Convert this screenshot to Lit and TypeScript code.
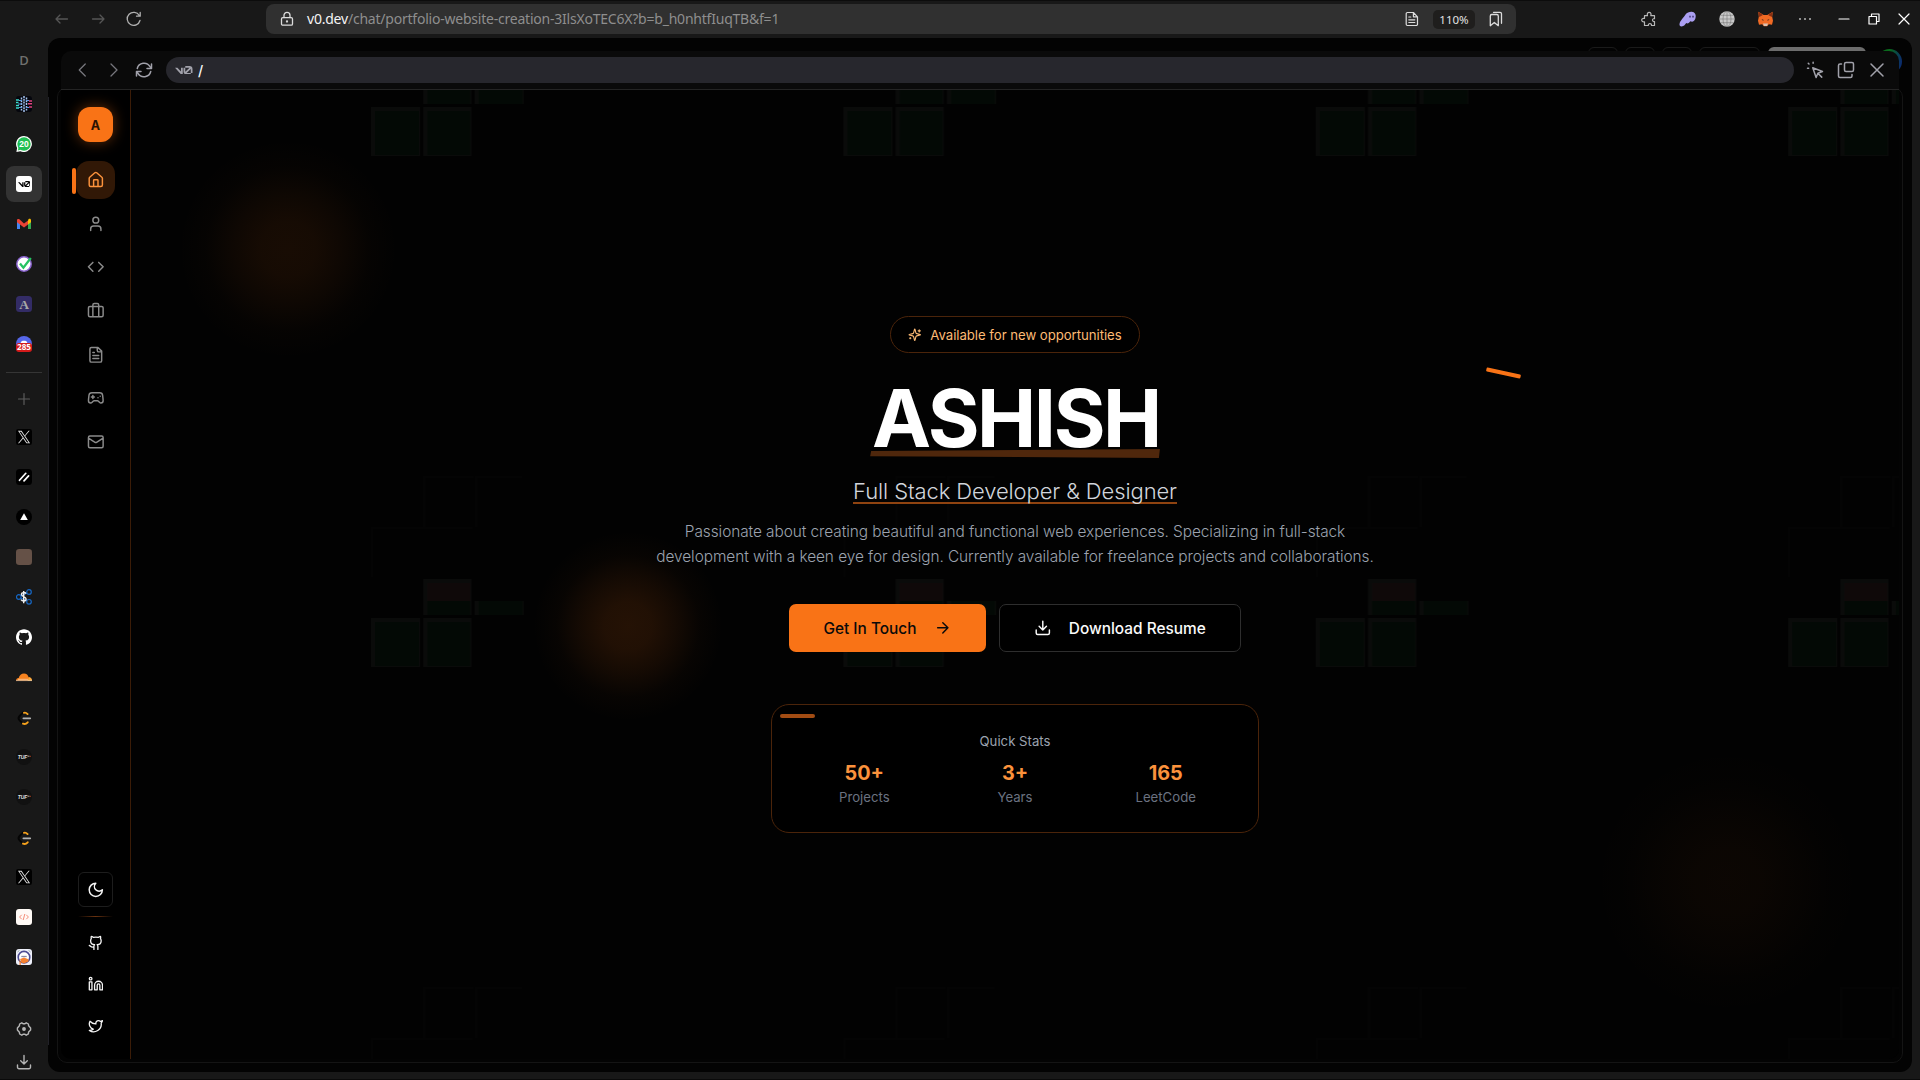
import { LitElement, html, svg, css } from "lit";
import { customElement, property } from "lit/decorators.js";

const line = (size: number, body: unknown, sw = 2, box = 24) => html`<svg
  width=${size} height=${size} viewBox="0 0 ${box} ${box}" fill="none" stroke="currentColor"
  stroke-width=${sw} stroke-linecap="round" stroke-linejoin="round">${body}</svg>`;

const p = (d: string) => svg`<path d=${d}></path>`;

const glyph = {
  home: p("M15 21v-8a1 1 0 0 0-1-1h-4a1 1 0 0 0-1 1v8M3 10a2 2 0 0 1 .709-1.528l7-5.999a2 2 0 0 1 2.582 0l7 5.999A2 2 0 0 1 21 10v9a2 2 0 0 1-2 2H5a2 2 0 0 1-2-2z"),
  user: p("M19 21v-2a4 4 0 0 0-4-4H9a4 4 0 0 0-4 4v2M12 3a4 4 0 1 1 0 8a4 4 0 1 1 0-8z"),
  code: p("m16 18 6-6-6-6M8 6l-6 6 6 6"),
  briefcase: p("M16 20V4a2 2 0 0 0-2-2h-4a2 2 0 0 0-2 2v16M4 6h16a2 2 0 0 1 2 2v10a2 2 0 0 1-2 2H4a2 2 0 0 1-2-2V8a2 2 0 0 1 2-2z"),
  file: p("M15 2H6a2 2 0 0 0-2 2v16a2 2 0 0 0 2 2h12a2 2 0 0 0 2-2V7ZM14 2v4a2 2 0 0 0 2 2h4M10 9H8M16 13H8M16 17H8"),
  gamepad: p("M6 11h4M8 9v4M15 12h.01M18 10h.01M17.32 5H6.68a4 4 0 0 0-3.978 3.59c-.006.052-.01.101-.017.152C2.604 9.416 2 14.456 2 16a3 3 0 0 0 3 3c1 0 1.5-.5 2-1l1.414-1.414A2 2 0 0 1 9.828 16h4.344a2 2 0 0 1 1.414.586L17 18c.5.5 1 1 2 1a3 3 0 0 0 3-3c0-1.545-.604-6.584-.685-7.258-.007-.05-.011-.1-.017-.151A4 4 0 0 0 17.32 5z"),
  mail: p("M4 4h16a2 2 0 0 1 2 2v12a2 2 0 0 1-2 2H4a2 2 0 0 1-2-2V6a2 2 0 0 1 2-2zM22 7l-8.97 5.7a1.94 1.94 0 0 1-2.06 0L2 7"),
  moon: p("M12 3a6 6 0 0 0 9 9 9 9 0 1 1-9-9Z"),
  github: p("M15 22v-4a4.8 4.8 0 0 0-1-3.5c3 0 6-2 6-5.5.08-1.25-.27-2.48-1-3.5.28-1.15.28-2.35 0-3.5 0 0-1 0-3 1.5-2.64-.5-5.36-.5-8 0C6 2 5 2 5 2c-.3 1.15-.3 2.35 0 3.5A5.403 5.403 0 0 0 4 9c0 3.5 3 5.5 6 5.5-.39.49-.68 1.05-.85 1.65-.17.6-.22 1.23-.15 1.85v4M9 18c-4.51 2-5-2-7-2"),
  linkedin: p("M16 8a6 6 0 0 1 6 6v7h-4v-7a2 2 0 0 0-2-2 2 2 0 0 0-2 2v7h-4v-7a6 6 0 0 1 6-6zM2 9h4v12H2zM4 2a2 2 0 1 1 0 4a2 2 0 1 1 0-4z"),
  twitter: p("M22 4s-.7 2.1-2 3.4c1.6 10-9.4 17.3-18 11.6 2.2.1 4.4-.6 6-2C3 15.5.5 9.6 3 5c2.2 2.6 5.6 4.1 9 4-.9-4.2 4-6.6 7-3.8 1.1 0 3-1.2 3-1.2z"),
  sparkles: p("M9.937 15.5A2 2 0 0 0 8.5 14.063l-6.135-1.582a.5.5 0 0 1 0-.962L8.5 9.936A2 2 0 0 0 9.937 8.5l1.582-6.135a.5.5 0 0 1 .963 0L14.063 8.5A2 2 0 0 0 15.5 9.937l6.135 1.581a.5.5 0 0 1 0 .964L15.5 14.063a2 2 0 0 0-1.437 1.437l-1.582 6.135a.5.5 0 0 1-.963 0zM20 3v4M22 5h-4M4 17v2M5 18H3"),
  arrow: p("M5 12h14M12 5l7 7-7 7"),
  download: p("M21 15v4a2 2 0 0 1-2 2H5a2 2 0 0 1-2-2v-4M7 10l5 5 5-5M12 15V3"),
};

const v0 = (w: number, fill: string) => html`<svg width=${w} height=${w / 2} viewBox="0 6 24 12" fill=${fill}>
  <path d="M14.066 6.028v2.22h5.729q.075-.001.148.005l-5.853 5.752a2 2 0 0 1-.024-.309V8.247h-2.353v5.45c0 2.322 1.935 4.222 4.258 4.222h5.675v-2.22h-5.675q-.03 0-.059-.003l5.729-5.629q.006.082.006.166v5.465H24v-5.465a4.204 4.204 0 0 0-4.205-4.205zM0 8.245l8.28 9.266c.839.94 2.396.346 2.396-.914V8.245H8.19v5.44l-4.86-5.44Z"></path></svg>`;

const fav = (body: unknown, box = 16) => html`<svg width="16" height="16" viewBox="0 0 ${box} ${box}">${body}</svg>`;

const xLogo = fav(svg`<rect width="24" height="24" rx="3.5" fill="#000"></rect>
  <path transform="translate(2.8 2.8) scale(.77)" fill="#e8e8e8" d="M14.234 10.162 22.977 0h-2.072l-7.591 8.824L7.251 0H.258l9.168 13.343L.258 24H2.33l8.016-9.318L16.749 24h6.993zm-2.837 3.299-.929-1.329L3.076 1.56h3.182l5.965 8.532.929 1.329 7.754 11.09h-3.182z"></path>`, 24);

const leet = fav(svg`<g transform="translate(0 .4)"><path d="M7 3.200 3.600 6.600a3.200 3.200 0 0 0 0 4.400L6.400 13.600" fill="none" stroke="#050505" stroke-width="1.900" stroke-linecap="round"></path>
  <path d="M8 3.400c1.300-.5 2.400 0 3.600 1.300M7 14.200c1.700.8 3.300.3 4.700-1.300" fill="none" stroke="#f5a11c" stroke-width="1.900" stroke-linecap="round"></path>
  <path d="M7.300 9h7" stroke="#b3b3b3" stroke-width="1.600" stroke-linecap="round"></path></g>`);

const tuf = fav(svg`<circle cx="8" cy="8" r="8" fill="#111"></circle>
  <text x="1.800" y="9.900" font-size="5.200" font-weight="700" font-style="italic" font-family="Liberation Sans, sans-serif" textLength="9.500" lengthAdjust="spacingAndGlyphs" fill="#e4e4e4">TUF</text>
  <path d="M11.500 7.200h2" stroke="#aaa"></path><path d="M13.600 7.300h1.400" stroke="#a33c1c"></path>`);

const pinned = [
  fav(svg`<rect width="16" height="16" rx="3" fill="#05060d"></rect>
    <path d="M8 0v16M5.500 1.500v13M10.500 1.500v13" stroke="#a5c4ee" stroke-width="1.500" stroke-dasharray="2 .8"></path>
    <path d="M3 4.500h3M2 8h4M3 11.500h3M10 4.500h3M10 11.500h3" stroke="#5c9ae0"></path>
    <path d="M0 4h3M0 6.500h2.500M0 9.500h3M0 12h3" stroke="#3bdccc" stroke-width="1.500"></path>
    <path d="M13 5h3M12 7.700h4M13 11h3" stroke="#e0447f" stroke-width="1.500"></path>`),
  fav(svg`<path d="M8 0a8 8 0 1 1-3.600 15.200L.4 16l.7-4A8 8 0 0 1 8 0z" fill="#fff"></path><circle cx="8" cy="8" r="6.700" fill="#1fbf52"></circle>
    <path d="M1.900 14.400 2.600 11l2.600 2.600z" fill="#1fbf52"></path>
    <text x="3.300" y="10.900" textLength="9.400" lengthAdjust="spacingAndGlyphs" font-size="8.200" font-weight="700" font-family="Liberation Sans, sans-serif" fill="#fff">20</text>`),
  html`<span class="v0fav">${v0(12.500, "#000")}</span>`,
  fav(svg`<path d="M1 3.800v9.200h3V7.500z" fill="#4285f4"></path><path d="M15 3.800v9.200h-3V7.500z" fill="#34a853"></path>
    <path d="M1 4v2.300l3 2.300V5zM4 8.600 8 11.400l4-2.800V4.600L8 7.600 3.400 3.300C2.200 2.500 1 3 1 4.300z" fill="#ea4335"></path><path d="M12 4.600v4l3-2.300V4.300c0-1.500-1.500-1.900-2.500-1z" fill="#fbbc04"></path>`),
  fav(svg`<circle cx="8" cy="8" r="7.200" fill="#fff" stroke="#8a63cf" stroke-width="1.500"></circle>
    <path d="m4 7.500 3.400 4.200L14.800 2" fill="none" stroke="#27c363" stroke-width="2.300"></path>`),
  fav(svg`<rect width="16" height="16" rx="3.500" fill="#332c66"></rect>
    <text x="8" y="12.700" text-anchor="middle" font-size="13.500" font-weight="700" font-family="Liberation Serif, serif" fill="#a7a7a7">A</text>`),
  fav(svg`<circle cx="8" cy="8" r="8" fill="#5667ea"></circle><path d="M4.500 7.500C5 5 6 4.700 8 4.700s3 .3 3.500 2.800z" fill="#fff"></path>
    <rect x="0" y="7" width="16" height="9" rx="3" fill="#d41a1a"></rect>
    <text x="1" y="14.400" textLength="14" lengthAdjust="spacingAndGlyphs" font-size="8" font-weight="700" font-family="Open Sans, sans-serif" fill="#fff">285</text>`),
];

const tabs = [
  xLogo,
  fav(svg`<rect width="16" height="16" rx="3.500" fill="#000"></rect>
    <path d="M3.500 11.300 9.800 4.300M8 11.900l4.600-5" stroke="#fff" stroke-width="1.700" stroke-linecap="round"></path>`),
  fav(svg`<circle cx="8" cy="8" r="8" fill="#000"></circle><path d="M8 4.300 11.800 11H4.200z" fill="#fff"></path>`),
  fav(svg`<rect width="16" height="16" rx="3.200" fill="#655147"></rect>`),
  fav(svg`<g fill="none" stroke="#1667c4" stroke-width="1.200"><circle cx="13" cy="3" r="2.300"></circle><circle cx="13" cy="12.800" r="2.300"></circle><circle cx="2.800" cy="8" r="2.300"></circle><path d="M5 7l6-3M5 9l6 3"></path></g>
    <path d="M10 4.600C9 3 5.300 3.200 5.500 5.500c.2 2.400 4.600 1.900 4.600 4.600 0 2.500-3.900 2.500-5 .6M7.700 2v12.300" fill="none" stroke="#f0f0f0" stroke-width="1.400"></path>`),
  fav(svg`<path fill="#fff" d="M12 .297c-6.630 0-12 5.373-12 12 0 5.303 3.438 9.800 8.205 11.385.6.113.820-.258.820-.577 0-.285-.010-1.040-.015-2.040-3.338.724-4.042-1.610-4.042-1.610C4.422 18.070 3.633 17.700 3.633 17.700c-1.087-.744.084-.729.084-.729 1.205.084 1.838 1.236 1.838 1.236 1.070 1.835 2.809 1.305 3.495.998.108-.776.417-1.305.760-1.605-2.665-.300-5.466-1.332-5.466-5.930 0-1.310.465-2.380 1.235-3.220-.135-.303-.540-1.523.105-3.176 0 0 1.005-.322 3.300 1.230.960-.267 1.980-.399 3-.405 1.020.006 2.040.138 3 .405 2.280-1.552 3.285-1.230 3.285-1.230.645 1.653.240 2.873.120 3.176.765.840 1.230 1.910 1.230 3.220 0 4.610-2.805 5.625-5.475 5.920.420.360.810 1.096.810 2.220 0 1.606-.015 2.896-.015 3.286 0 .315.210.690.825.570C20.565 22.092 24 17.592 24 12.297c0-6.627-5.373-12-12-12"></path>`, 24),
  fav(svg`<path d="M0 11.800c0-1.500 1-2.600 2.700-2.700C3.200 6 5.500 4.400 8 4.400s4.100 1.700 4.600 3.800c2 .1 3.400 1.500 3.400 3.600z" fill="#f6821f"></path>
    <path d="M11.500 11.800 13 8.300c1.900.1 3 1.600 3 3.500z" fill="#fbad41"></path><path d="M2 10.300h10" stroke="#fff" stroke-width=".5"></path><path d="M0 11.600h16" stroke="#e6d6c6" stroke-width=".6"></path>`),
  leet, tuf, tuf, leet, xLogo,
  fav(svg`<rect width="16" height="16" rx="3" fill="#fffaf6"></rect>
    <path d="M5.700 5.800 3.600 8l2.100 2.200M10.300 5.800 12.400 8l-2.100 2.200M8.800 5 7.200 11" fill="none" stroke="#f58d78" stroke-width="1"></path>`),
  fav(svg`<rect width="16" height="16" rx="3" fill="#eef0fa"></rect><circle cx="8" cy="8.200" r="5.800" fill="#fff" stroke="#4d4c93" stroke-width="1.600"></circle>
    <path d="M1.500 3 3.500 1.300M14.500 3l-2-1.700" stroke="#9aa"></path>
    <path d="M5.300 7.500h5.400" stroke="#8a8aa5" stroke-width="1.300"></path><path d="M3.500 10.200 8 8.600l4.500 1.600v2.300L8 14.600l-3.200-1.400zM3.500 10v6h1.300v-5z" fill="#f58232"></path>`),
];

@customElement("browser-tabs")
export class BrowserTabs extends LitElement {
  static styles = css`
    :host { display: flex; flex-direction: column; width: 48px; box-sizing: border-box; padding: 5px 0 0 6px; }
    .tab { width: 36px; height: 36px; border-radius: 8px; display: flex; align-items: center; justify-content: center; flex: none; }
    .tab.on { background: #333; }
    .letter { font: 600 13px/34px "Open Sans", sans-serif; color: #70706e; margin-bottom: 7px; align-items: flex-start; }
    .group { display: flex; flex-direction: column; gap: 4px; }
    .rule { width: 36px; height: 1px; background: #353535; margin: 10px 0 8px; flex: none; }
    .dim { color: #5c5c5c; margin-bottom: 2px; }
    .tools { margin-top: auto; display: flex; flex-direction: column; align-items: center; width: 36px; gap: 16.500px; color: #b5b5b5; padding-bottom: 10.500px; }
    .v0fav { width: 16px; height: 16px; border-radius: 3px; background: #fff; display: flex; align-items: center; justify-content: center; }
    svg { display: block; }
  `;
  render() {
    return html`
      <div class="tab letter">D</div>
      <div class="group">${pinned.map((f, i) => html`<div class="tab ${i === 2 ? "on" : ""}">${f}</div>`)}</div>
      <div class="rule"></div>
      <div class="tab dim">${line(16, p("M8 2.500v11M2.500 8h11"), 1.200, 16)}</div>
      <div class="group">${tabs.map((f) => html`<div class="tab">${f}</div>`)}</div>
      <div class="tools">
        ${line(16, svg`<path d="M5.800 1.800 7 2.800h2l1.200-1 2.200 1.200.2 1.800L14.600 7v2l-2 2.100-.2 1.800-2.200 1.300L9 13.200H7l-1.200 1L3.600 13l-.2-1.800L1.400 9V7l2-2.200.2-1.800z"></path><circle cx="8" cy="8" r="1.200" fill="currentColor"></circle>`, 1.400, 16)}
        ${line(16, p("M1.500 11v2.200a1.500 1.500 0 0 0 1.500 1.500h10a1.500 1.500 0 0 0 1.500-1.500V11M8 1.500v8.300M4.700 6.800 8 10l3.300-3.200"), 1.400, 16)}
      </div>`;
  }
}

@customElement("browser-bar")
export class BrowserBar extends LitElement {
  static styles = css`
    :host { display: flex; align-items: flex-start; height: 38px; box-sizing: border-box; padding-top: 4px; color: #dcdcdc; }
    .nav { display: flex; align-items: center; height: 30px; width: 266px; box-sizing: border-box; padding-left: 54px; gap: 20px; color: #555; }
    .nav .live { color: #b0b0b0; display: flex; }
    .address { width: 1250px; height: 30px; border-radius: 8px; background: #303030; display: flex; align-items: center; box-sizing: border-box; padding: 0 12px 0 13px; }
    .url { margin-left: 12px; font: 14px/20px "Noto Sans", "Open Sans", sans-serif; color: #8e8e8e; white-space: nowrap; letter-spacing: -0.220px; padding-bottom: 1px; }
    .url b { color: #f4f4f4; font-weight: 400; }
    .right { margin-left: auto; display: flex; align-items: center; gap: 13px; }
    .zoom { width: 42px; height: 19px; border-radius: 5px; background: #1f1e1d; text-align: center; font: 11.500px/19px "Noto Sans", sans-serif; color: #e2e2e2; }
    .ext { display: flex; align-items: center; height: 30px; padding-left: 124.500px; gap: 22.500px; color: #b8b8b8; }
    .win { display: flex; align-items: center; height: 30px; gap: 18.200px; margin-left: 25px; color: #fff; }
    svg { display: block; flex: none; }
  `;
  render() {
    return html`
      <div class="nav">
        ${line(16, p("M2 8h11.500M6 4 2 8l4 4"), 1.300, 16)}
        ${line(16, p("M14 8H2.500M10 4l4 4-4 4"), 1.300, 16)}
        <span class="live">${line(16, p("M14 9.500A6.500 6.500 0 1 1 13.300 4.500M14.200 1.500v3.700h-3.700"), 1.300, 16)}</span>
      </div>
      <div class="address">
        ${line(16, svg`<rect x="2.500" y="6.700" width="11" height="7.500" rx="1.300"></rect><path d="M5 6.500V4.300a3 3 0 0 1 6 0v2.200"></path><circle cx="8" cy="10.500" r=".5"></circle>`, 1.300, 16)}
        <span class="url"><b>v0.dev</b>/chat/portfolio-website-creation-3IlsXoTEC6X?b=b_h0nhtfIuqTB&amp;f=1</span>
        <div class="right">
          ${line(16, p("M2.200 2.700A1.200 1.200 0 0 1 3.400 1.500h6l4.100 4.300v7.500a1.200 1.200 0 0 1-1.200 1.200H3.400a1.200 1.200 0 0 1-1.200-1.200zM9.400 1.800v4h3.800M4.800 6h2M4.800 8.800h6M4.800 11.500h6"), 1.200, 16)}
          <span class="zoom">110%</span>
          ${line(16, p("M2.300 5a1.500 1.500 0 0 1 1.500-1.500h5A1.500 1.500 0 0 1 10.300 5v9.700L6.300 11.500l-4 3.200zM5.500 1.300H12a1.500 1.500 0 0 1 1.500 1.500v9.500"), 1.300, 16)}
        </div>
      </div>
      <div class="ext">
        ${line(16, p("M3.500 4.700h3c-.7-2 .3-3.400 1.700-3.400s2.300 1.500 1.600 3.400h3.700v3c-1-.3-2 .3-2 1.400s1 1.700 2 1.400v4h-3c.1-1.400-.7-2-1.600-2s-1.700.8-1.600 2H3.500v-3.700c-1.800.3-2.800-.6-2.800-1.700s1-2 2.800-1.600z"), 1.200, 16)}
        <svg width="17" height="16" viewBox="0 0 17 16"><path d="M6.500 3.500C8 1.500 10.500.5 12.800.7c3 .3 4.200 2.600 3.900 5-.2 2.700-1.800 4.700-3.500 5-.8.100-1.200-.4-1.500-.4-.9 0-1.300 2.300-3.200 2.200-.7 0-.9-.4-1.200-.4C6.200 13.500 5.200 15.500 2.500 15.500 1 15.500.3 14.500.5 13c.5-3.500 4-6 6-9.500z" fill="#ab9ff2"></path><path d="M11 4.800v1.700M14 4.800v1.700" stroke="#2b2154" stroke-width="1.200"></path></svg>
        <svg width="16" height="16" viewBox="0 0 16 16"><circle cx="8" cy="8" r="7.700" fill="#c9c9c9"></circle><g fill="none" stroke="#777" stroke-width=".6"><path d="M8 .3v15.400M.3 8h15.400M1.500 4.300h13M1.500 11.700h13"></path><ellipse cx="8" cy="8" rx="4" ry="7.700"></ellipse></g></svg>
        <svg width="17" height="16" viewBox="0 0 16 16"><path d="M.8.800 6.200 4h3.600L15.200.800l-.5 5 .8 4-1 4-3.200-.6-1.600 2.100H6.300l-1.600-2.100-3.200.6-1-4 .8-4z" fill="#f06a24"></path><path d="M.8.800 5.500 4 1.700 6zM15.200.800 10.500 4l3.800 2z" fill="#8a2f12"></path><path d="m4 8 2.300 1-.8.800zM12 8 9.700 9l.8.800z" fill="#222"></path><path d="M5.500 12.500h5l-.9 2.500H6.400z" fill="#d8c2b4"></path></svg>
        <svg width="16" height="16" viewBox="0 0 16 16" fill="#b5b5b5"><circle cx="3" cy="8" r="1"></circle><circle cx="8" cy="8" r="1"></circle><circle cx="13" cy="8" r="1"></circle></svg>
      </div>
      <div class="win">
        ${line(12, p("M1 6h10"), 1.200, 12)}
        ${line(12, p("M1 3.500h7.500V11H1zM3.500 3.200V1H11v7.500H8.700"), 1.200, 12)}
        ${line(12, p("m1 1 10 10M11 1 1 11"), 1.200, 12)}
      </div>`;
  }
}

@customElement("preview-bar")
export class PreviewBar extends LitElement {
  static styles = css`
    :host { display: flex; align-items: center; height: 39px; box-sizing: border-box; border-bottom: 1px solid #242424; background: #0a0a0a; border-radius: 10px 10px 0 0; padding: 0 13px; color: #a1a1aa; }
    .nav { display: flex; gap: 12.500px; width: 92px; align-items: center; color: #77777d; }
    .nav svg:last-child { color: #a1a1aa; }
    .path { flex: none; width: 1628px; height: 26px; border-radius: 13px; background: #27272d; display: flex; align-items: center; box-sizing: border-box; padding-left: 9px; gap: 5.500px; color: #fafafa; font: 500 14px Inter, sans-serif; }
    .acts { display: flex; gap: 13px; padding-left: 12px; }
    svg { display: block; flex: none; }
  `;
  render() {
    return html`
      <div class="nav">
        ${line(18, p("m15 4-8 8 8 8"), 1.700)}${line(18, p("m8 4 8 8-8 8"), 1.700)}
        ${line(18, p("M3 10a9.300 9.300 0 0 1 17-2.500L22 10M22 4v6h-6M21 14a9.300 9.300 0 0 1-17 2.500L2 14M2 20v-6h6"), 2)}
      </div>
      <div class="path">${v0(17.500, "#a1a1aa")}<span>/</span></div>
      <div class="acts">
        ${line(18, p("m9 9 4.500 13 2.300-5.700L22 14zM15.800 16.300 21 21.500M9.500 1.500v1.500M2 9.500h1.500M3 3l1 1"), 2)}
        ${line(18, p("M12 2h8a2 2 0 0 1 2 2v8a2 2 0 0 1-2 2h-8a2 2 0 0 1-2-2V4a2 2 0 0 1 2-2zM6 4H4a2 2 0 0 0-2 2v14a2 2 0 0 0 2 2h14a2 2 0 0 0 2-2v-2"), 2)}
        ${line(18, p("m4 4 16 16M20 4 4 20"), 2)}
      </div>`;
  }
}

@customElement("side-nav")
export class SideNav extends LitElement {
  static styles = css`
    :host { display: flex; flex-direction: column; align-items: center; width: 70px; box-sizing: border-box; background: #000; border-right: 1px solid #3b1c07; padding: 17px 0 16px; border-radius: 0 0 0 10px; }
    .logo { width: 35px; height: 35px; border-radius: 12px; background: #f97316; color: #2a1203; font: 700 12.500px/37px Inter, sans-serif; text-align: center; box-shadow: 0 0 14px rgba(249, 115, 22, .4); flex: none; }
    .items { display: flex; flex-direction: column; gap: 5.200px; margin-top: 18.500px; }
    .item { position: relative; width: 38.500px; height: 38.500px; border-radius: 13px; display: flex; align-items: center; justify-content: center; color: #8b8b8b; }
    .item.on { background: #311806; color: #fb923c; }
    .item.on::before { content: ""; position: absolute; left: -4.500px; top: 7px; width: 4px; height: 26px; border-radius: 2px; background: #f97316; }
    .foot { margin-top: auto; display: flex; flex-direction: column; align-items: center; color: #f5f5f5; }
    .mode { width: 35px; height: 35px; box-sizing: border-box; border: 1px solid #1d1d1d; border-radius: 6px; display: flex; align-items: center; justify-content: center; }
    .rule { width: 35px; height: 1px; margin: 9px 0 8px; background: linear-gradient(90deg, transparent, #6b3310, transparent); }
    .social { width: 35px; height: 35px; margin-bottom: 6.500px; display: flex; align-items: center; justify-content: center; }
    .social:last-child { margin-bottom: 0; }
    svg { display: block; }
  `;
  render() {
    const items = [glyph.home, glyph.user, glyph.code, glyph.briefcase, glyph.file, glyph.gamepad, glyph.mail];
    return html`
      <div class="logo">A</div>
      <div class="items">${items.map((g, i) => html`<div class="item ${i === 0 ? "on" : ""}">${line(17.600, g)}</div>`)}</div>
      <div class="foot">
        <div class="mode">${line(17.600, glyph.moon)}</div>
        <div class="rule"></div>
        ${[glyph.github, glyph.linkedin, glyph.twitter].map((g) => html`<div class="social">${line(15.800, g)}</div>`)}
      </div>`;
  }
}

@customElement("stat-item")
export class StatItem extends LitElement {
  @property() value = "";
  @property() label = "";
  static styles = css`
    :host { display: flex; flex-direction: column; align-items: center; }
    .value { font: 700 19.800px/28px Inter, sans-serif; color: #fb923c; }
    .label { font: 400 13.200px/20px Inter, sans-serif; color: #6b7280; }
  `;
  render() {
    return html`<span class="value">${this.value}</span><span class="label">${this.label}</span>`;
  }
}

@customElement("hero-page")
export class HeroPage extends LitElement {
  static styles = css`
    :host { position: relative; display: block; flex: 1; background: #020202; overflow: hidden; border-radius: 0 0 10px 0; font-family: Inter, sans-serif; }
    .backdrop { position: absolute; inset: 0; display: block; }
    .streak { position: absolute; left: 1355px; top: 281px; width: 35px; height: 4px; border-radius: 1px; background: #f97316; transform: rotate(12deg); }
    .hero { position: relative; display: flex; flex-direction: column; align-items: center; padding-top: 226px; }
    .pill { height: 37px; width: 250px; box-sizing: border-box; border: 1px solid #4b240a; border-radius: 19px; background: #000; display: flex; align-items: center; justify-content: center; gap: 8.500px; color: #fdba74; font-size: 13.200px; letter-spacing: -0.040px; }
    .pill span { padding-top: 1px; }
    h1 { margin: 25px 0 0; position: relative; font-size: 79.200px; line-height: 80px; font-weight: 700; letter-spacing: -2.400px; color: #fff; }
    h1 span { position: relative; left: 1px; }
    h1::before { content: ""; position: absolute; left: -1px; right: -1px; top: 71px; height: 9px; background: #4f270c; clip-path: polygon(1px 2px, 100% 0, calc(100% - 1px) 100%, 0 80%); }
    h2 { margin: 17px 0 0; position: relative; font-size: 22px; line-height: 32px; font-weight: 300; letter-spacing: -0.110px; color: #d1d5db; }
    h2 span { position: relative; }
    h2::before { content: ""; position: absolute; left: 0; right: 0; top: 27px; height: 2px; background: #8f4310; }
    p { margin: 12px 0 0; width: 740px; text-align: center; font-size: 15.400px; line-height: 25px; font-weight: 300; letter-spacing: -0.060px; color: #9ca3af; }
    .actions { display: flex; gap: 13px; margin-top: 35px; }
    .btn { height: 48px; box-sizing: border-box; border-radius: 7px; display: flex; align-items: center; justify-content: center; font-size: 15.400px; font-weight: 500; }
    .primary { width: 197px; background: #f97316; color: #0a0a0a; gap: 17.500px; }
    .ghost { width: 242px; background: #000; border: 1px solid #2e2e2e; color: #fafafa; gap: 17px; }
    .card { position: relative; margin-top: 52px; width: 488px; height: 129px; box-sizing: border-box; border: 1px solid #4b240a; border-radius: 18px; background: #000; padding: 25.500px 17px; }
    .card::before { content: ""; position: absolute; left: 8px; top: 9px; width: 35px; height: 4px; border-radius: 2px; background: #a24c13; }
    .caption { text-align: center; font-size: 13.200px; line-height: 20px; color: #9ca3af; }
    .stats { display: grid; grid-template-columns: repeat(3, 1fr); margin-top: 8.500px; }
    svg { display: block; flex: none; }
  `;
  render() {
    return html`
      <svg class="backdrop" width="1768" height="970" viewBox="131 90 1768 970">
        <defs>
          <pattern id="blocks" patternUnits="userSpaceOnUse" x="371" y="66" width="472.400" height="511">
            <g fill="#0a0b0a">
              <rect x="52.300" y="2" width="48" height="36"></rect><rect x="103.600" y="24" width="49" height="14"></rect>
              <rect x="0" y="41" width="49" height="49"></rect><rect x="52.300" y="41" width="48" height="49"></rect>
            </g>
            <rect x="56.300" y="6" width="43" height="18" fill="#0f0909"></rect>
            <g fill="#030905">
              <rect x="56.300" y="24" width="43" height="14"></rect><rect x="107.600" y="24" width="44" height="14"></rect>
              <rect x="4" y="45" width="44" height="44"></rect><rect x="56.300" y="45" width="43" height="44"></rect>
            </g>
            <g fill="none" stroke="#040404" stroke-width="2">
              <path d="M53 461v-50h49M105 461v-50h46M1 511v-49h100"></path>
            </g>
          </pattern>
          <radialGradient id="glow"><stop offset="0" stop-color="#f97316"></stop><stop offset=".25" stop-color="#f97316" stop-opacity=".9"></stop><stop offset=".5" stop-color="#f97316" stop-opacity=".55"></stop><stop offset=".75" stop-color="#f97316" stop-opacity=".16"></stop><stop offset="1" stop-color="#f97316" stop-opacity="0"></stop></radialGradient>
        </defs>
        <rect x="131" y="90" width="1768" height="970" fill="url(#blocks)"></rect>
        <circle cx="288" cy="249" r="110" fill="url(#glow)" opacity=".09"></circle>
        <circle cx="628" cy="626" r="95" fill="url(#glow)" opacity=".14"></circle>
        <circle cx="1727" cy="882" r="135" fill="url(#glow)" opacity=".04"></circle>
      </svg>
      <div class="streak"></div>
      <div class="hero">
        <div class="pill">${line(13.500, glyph.sparkles)}<span>Available for new opportunities</span></div>
        <h1><span>ASHISH</span></h1>
        <h2><span>Full Stack Developer &amp; Designer</span></h2>
        <p>Passionate about creating beautiful and functional web experiences. Specializing in full-stack<br />development with a keen eye for design. Currently available for freelance projects and collaborations.</p>
        <div class="actions">
          <div class="btn primary"><span>Get In Touch</span>${line(17.600, glyph.arrow)}</div>
          <div class="btn ghost">${line(17.600, glyph.download)}<span>Download Resume</span></div>
        </div>
        <div class="card">
          <div class="caption">Quick Stats</div>
          <div class="stats">
            <stat-item value="50+" label="Projects"></stat-item>
            <stat-item value="3+" label="Years"></stat-item>
            <stat-item value="165" label="LeetCode"></stat-item>
          </div>
        </div>
      </div>`;
  }
}

@customElement("app-root")
export class AppRoot extends LitElement {
  static styles = css`
    :host { display: grid; grid-template: 38px 1042px / 48px 1872px; width: 1920px; height: 1080px; background: #181818; overflow: hidden; position: relative; }
    :host::before { content: ""; position: absolute; left: 0; right: 0; top: 0; height: 1px; background: #0c0c0c; }
    :host::after { content: ""; position: absolute; left: 0; right: 0; bottom: 0; height: 1px; background: #0a0a0a; }
    browser-bar { grid-column: 1 / 3; }
    .view { position: relative; width: 1864px; height: 1034px; box-sizing: border-box; border-radius: 12px; background: #030303; padding: 13px; display: flex; overflow: hidden; }
    .edge { position: absolute; left: 0; top: 59px; width: 1px; height: 948px; background: #212128; }
    .frame { position: absolute; left: 9px; top: 49px; width: 1846px; height: 976px; box-sizing: border-box; border: 1px solid #141414; border-radius: 10px; }
    .under { position: absolute; left: 1540px; top: 9px; display: flex; gap: 7.500px; align-items: flex-start; }
    .ghost { box-sizing: border-box; height: 20px; border: 1px solid #1a1a1a; border-radius: 6px; width: 29.500px; }
    .ghost.wide { width: 61px; }
    .ghost.solid { width: 98px; background: #6c6c6c; border: 0; }
    .avatar { width: 25px; height: 25px; border-radius: 50%; margin: 2px 0 0 4px; background: linear-gradient(100deg, #0a6a1c 45%, #0b2c6c 90%); }
    .modal { position: relative; width: 1838px; height: 1008px; display: flex; flex-direction: column; }
    .page { flex: 1; display: flex; min-height: 0; }
  `;
  render() {
    return html`
      <browser-bar></browser-bar>
      <browser-tabs></browser-tabs>
      <div class="view">
        <div class="edge"></div>
        <div class="frame"></div>
        <div class="under">
          <div class="ghost"></div><div class="ghost"></div><div class="ghost"></div>
          <div class="ghost wide"></div><div class="ghost solid"></div><div class="avatar"></div>
        </div>
        <div class="modal">
          <preview-bar></preview-bar>
          <div class="page"><side-nav></side-nav><hero-page></hero-page></div>
        </div>
      </div>`;
  }
}
